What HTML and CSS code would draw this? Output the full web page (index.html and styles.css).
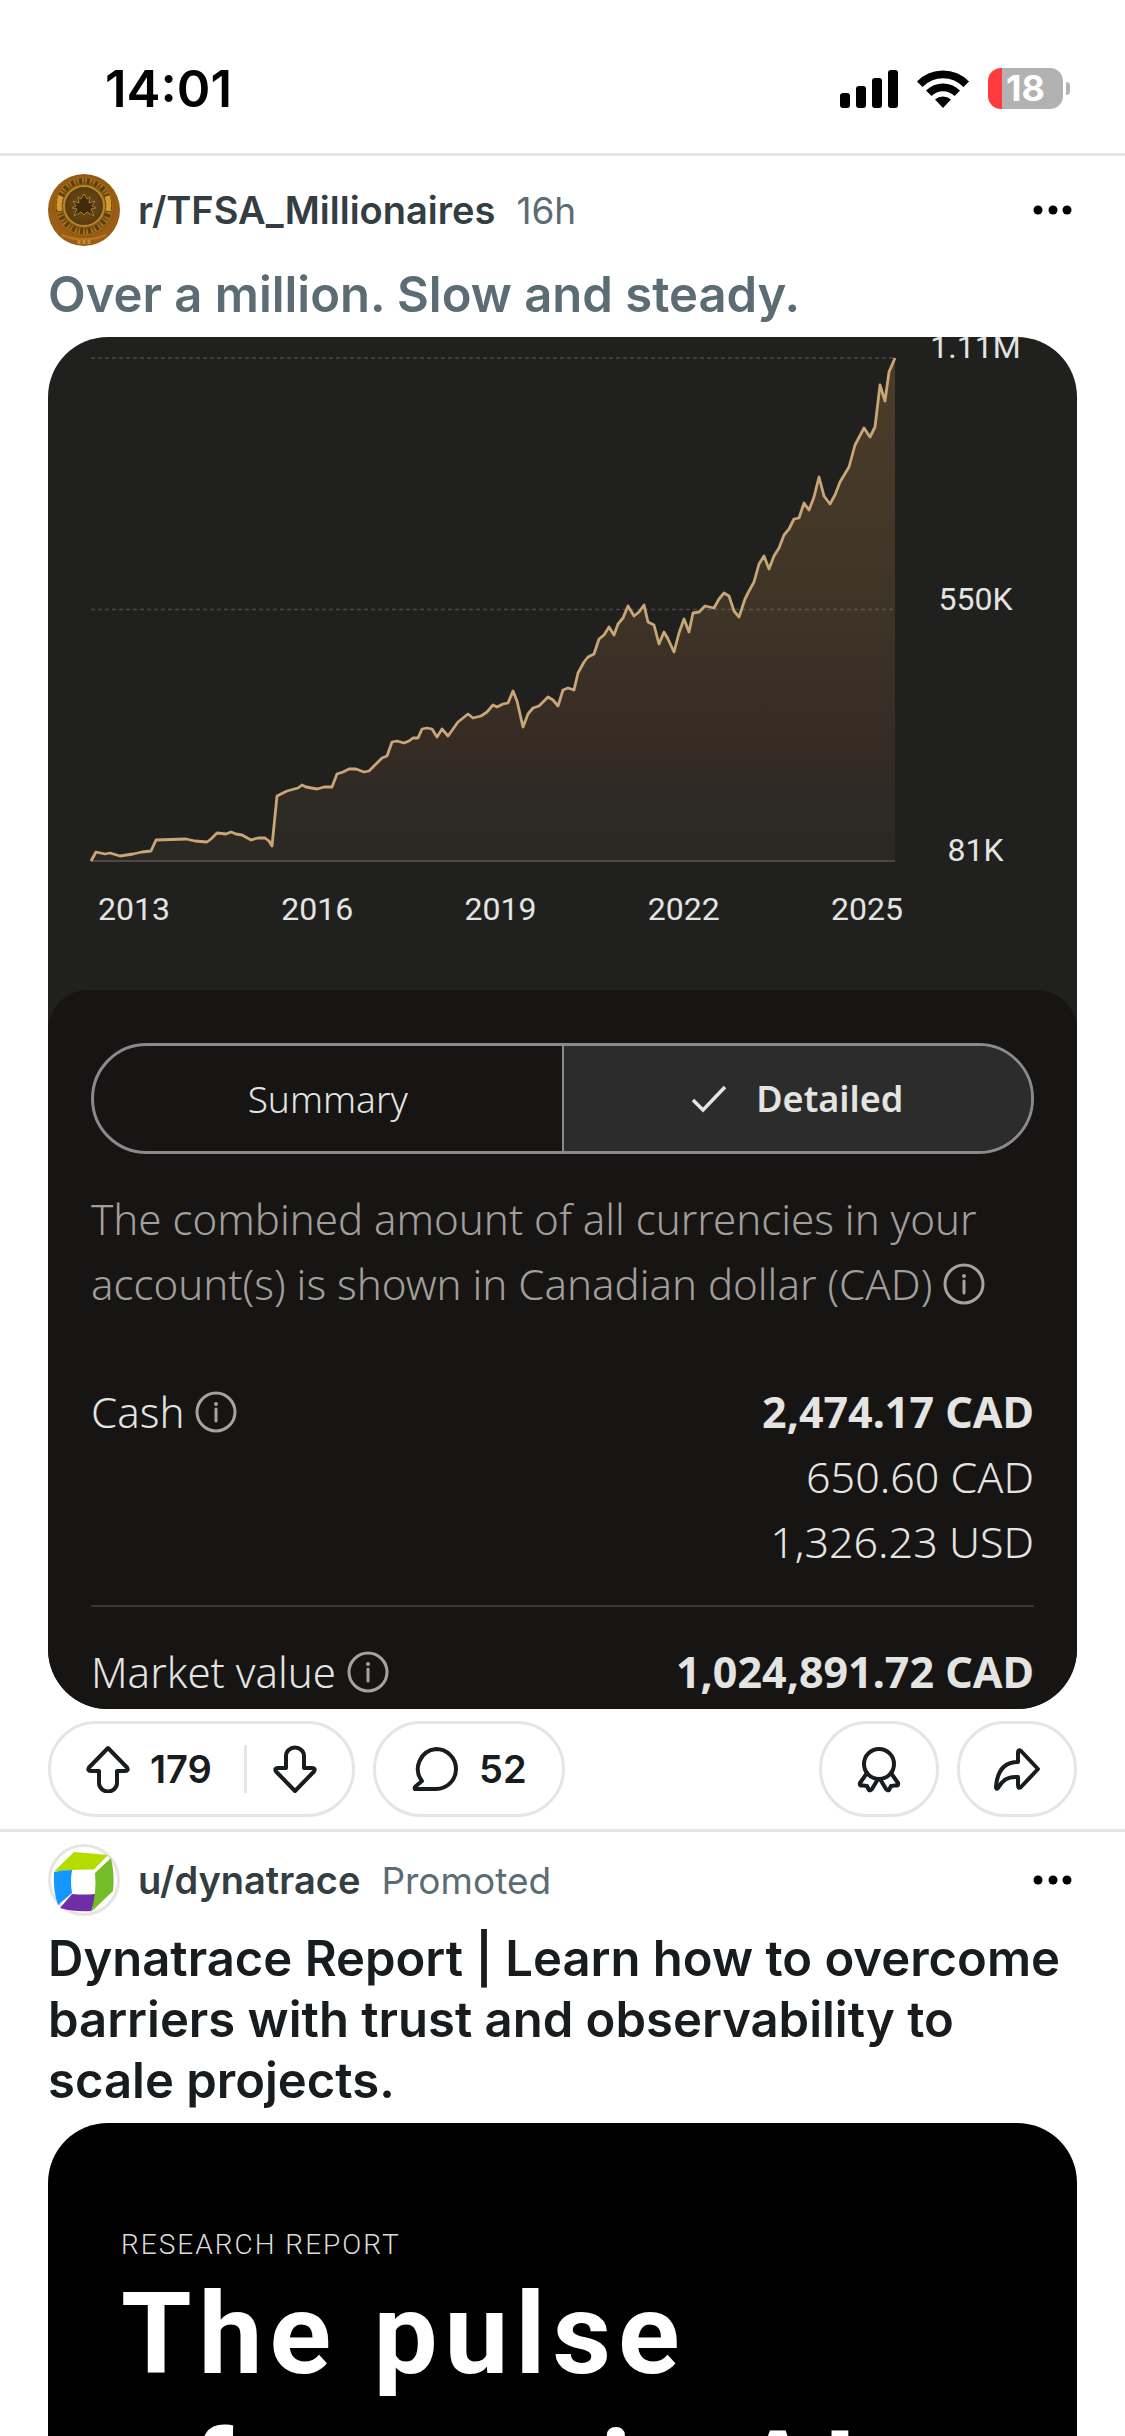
FILE: index.html
```html
<!DOCTYPE html>
<html lang="en">
<head>
<meta charset="utf-8">
<meta name="viewport" content="width=device-width, initial-scale=1">
<title>Home feed</title>
<link rel="stylesheet" href="styles.css">
</head>
<body>
<svg class="defs" aria-hidden="true">
  <symbol id="info" viewBox="0 0 42 42">
    <circle cx="21" cy="21" r="19" fill="none" stroke="currentColor" stroke-width="3"/>
    <circle cx="21" cy="13" r="2" fill="currentColor"/>
    <path d="M21 18v12" stroke="currentColor" stroke-width="3" stroke-linecap="round"/>
  </symbol>
  <symbol id="dots" viewBox="0 0 40 10">
    <circle cx="5" cy="5" r="4.5"/><circle cx="20" cy="5" r="4.5"/><circle cx="34" cy="5" r="4.5"/>
  </symbol>
</svg>

<header class="status">
  <time class="clock">14:01</time>
  <div class="indicators">
    <svg width="58" height="38" viewBox="0 0 58 38" role="img" aria-label="Signal">
      <rect x="0" y="23" width="10" height="15" rx="3"/><rect x="16" y="16" width="10" height="22" rx="3"/>
      <rect x="32" y="8" width="10" height="30" rx="3"/><rect x="48" y="0" width="10" height="38" rx="3"/>
    </svg>
    <svg width="52" height="38" viewBox="0 0 52 38" role="img" aria-label="Wi-Fi">
      <path d="M0 11.500A36 36 0 0 1 52 11.500L46.500 17A28.500 28.500 0 0 0 5.500 17Z"/>
      <path d="M9 20.500A24 24 0 0 1 43 20.500L37.500 26A16.500 16.500 0 0 0 14.500 26Z"/>
      <path d="M18 29.500A12 12 0 0 1 34 29.500L26 38Z"/>
    </svg>
    <div class="battery"><div class="battery-body">18</div><div class="battery-cap"></div></div>
  </div>
</header>

<main>
  <article class="post">
    <div class="post-head">
      <svg class="avatar" viewBox="0 0 72 72" role="img" aria-label="Gold coin">
        <defs>
          <radialGradient id="rim"><stop offset="0.6" stop-color="#6a4812"/><stop offset="0.85" stop-color="#a8741e"/><stop offset="1" stop-color="#8d5412"/></radialGradient>
          <radialGradient id="core"><stop offset="0" stop-color="#705018"/><stop offset="1" stop-color="#573a10"/></radialGradient>
        </defs>
        <circle cx="36" cy="36" r="36" fill="#9a5e16"/>
        <circle cx="36" cy="32" r="31" fill="url(#rim)"/>
        <circle cx="36" cy="32" r="25" fill="none" stroke="#5e3d0d" stroke-width="6" stroke-dasharray="3 2 1 2"/>
        <path d="M13 22A25 25 0 0 0 12 37M59 22A25 25 0 0 1 60 37" fill="none" stroke="#d39a2f" stroke-width="5"/>
        <circle cx="36" cy="32" r="20" fill="url(#core)" stroke="#b9862c" stroke-width="2"/>
        <path d="M36 20l3 5 3-2-1 6 6-2-3 5 4 2-5 1 3 7-7-4-3 3-3-3-7 4 3-7-5-1 4-2-3-5 6 2-1-6 3 2z" fill="#3f2b0c" stroke="#a67c32" stroke-width="1"/>
        <path d="M14 61q22 9 44 0" fill="none" stroke="#b87a22" stroke-width="2"/>
        <path d="M31 66v4M36 66v4M41 66v4" stroke="#c28a35" stroke-width="3"/>
      </svg>
      <a class="author" href="#">r/TFSA_Millionaires</a>
      <span class="meta">16h</span>
      <button class="more" aria-label="More options"><svg width="40" height="10"><use href="#dots"/></svg></button>
    </div>
    <h2 class="title visited">Over a million. Slow and steady.</h2>

    <div class="card account">
      <div class="chart">
        <div class="chart-body">
          <svg class="plot" viewBox="0 0 804 504" preserveAspectRatio="none" role="img" aria-label="Account value, 2013 to 2025">
            <defs>
              <linearGradient id="area" x1="0" y1="0" x2="0" y2="504" gradientUnits="userSpaceOnUse">
                <stop offset="0" stop-color="#4d3c29"/><stop offset="0.45" stop-color="#3f3527"/>
                <stop offset="0.75" stop-color="#372c24"/><stop offset="0.85" stop-color="#2f2a24"/><stop offset="1" stop-color="#2b2823"/>
              </linearGradient>
            </defs>
            <path fill="url(#area)" d="M0 503L5 494 14 496 19 495 29 498 42 496 51 494 60 493 65 482 95 481 104 483 116 484 120 481 126 475 135 476 140 474 145 476 151 477 160 482 167 480 174 480 178 483 181 488 186 438 196 433 207 430 211 427 215 429 226 431 233 429 241 429 246 416 252 414 258 411 265 411 273 414 278 413 285 406 291 400 296 398 301 384 306 383 313 385 318 383 322 380 327 380 331 371 336 370 341 371 346 379 351 371 357 378 367 364 377 356 382 360 390 358 396 354 402 347 406 349 412 346 417 345 422 333 426 343 432 369 437 356 442 350 448 348 457 339 462 342 467 348 472 332 477 330 483 332 487 315 493 304 497 299 503 296 508 281 513 277 518 269 523 277 527 266 532 260 537 248 543 258 548 254 553 247 557 264 563 267 568 286 573 274 577 281 583 294 588 275 593 261 598 274 602 255 608 254 614 248 623 250 628 241 633 235 638 238 643 253 648 259 654 241 658 233 663 224 668 206 673 198 678 211 683 198 688 190 693 177 698 171 703 161 708 160 713 145 718 152 723 139 728 119 733 138 739 146 744 137 749 124 758 109 764 87 773 70 779 79 784 69 789 27 794 43 798 14 804 0V503Z"/>
            <path d="M0 0H804M0 251.500H804" stroke="#8a867e" stroke-opacity="0.38" stroke-width="1.500" stroke-dasharray="4 3"/>
            <path d="M0 503H804" stroke="#5b554c" stroke-width="1.500"/>
            <path fill="none" stroke="#c9a677" stroke-width="2.800" stroke-linejoin="round" d="M0 503L5 494 14 496 19 495 29 498 42 496 51 494 60 493 65 482 95 481 104 483 116 484 120 481 126 475 135 476 140 474 145 476 151 477 160 482 167 480 174 480 178 483 181 488 186 438 196 433 207 430 211 427 215 429 226 431 233 429 241 429 246 416 252 414 258 411 265 411 273 414 278 413 285 406 291 400 296 398 301 384 306 383 313 385 318 383 322 380 327 380 331 371 336 370 341 371 346 379 351 371 357 378 367 364 377 356 382 360 390 358 396 354 402 347 406 349 412 346 417 345 422 333 426 343 432 369 437 356 442 350 448 348 457 339 462 342 467 348 472 332 477 330 483 332 487 315 493 304 497 299 503 296 508 281 513 277 518 269 523 277 527 266 532 260 537 248 543 258 548 254 553 247 557 264 563 267 568 286 573 274 577 281 583 294 588 275 593 261 598 274 602 255 608 254 614 248 623 250 628 241 633 235 638 238 643 253 648 259 654 241 658 233 663 224 668 206 673 198 678 211 683 198 688 190 693 177 698 171 703 161 708 160 713 145 718 152 723 139 728 119 733 138 739 146 744 137 749 124 758 109 764 87 773 70 779 79 784 69 789 27 794 43 798 14 804 0"/>
          </svg>
          <div class="y-axis"><span>1.11M</span><span>550K</span><span>81K</span></div>
        </div>
        <div class="x-axis"><span>2013</span><span>2016</span><span>2019</span><span>2022</span><span>2025</span></div>
      </div>

      <section class="panel">
        <div class="segmented">
          <button class="segment">Summary</button>
          <button class="segment selected"><svg width="36" height="28" viewBox="0 0 36 28" aria-hidden="true"><path d="M2 15l10 10L34 2" fill="none" stroke="currentColor" stroke-width="3.500"/></svg>Detailed</button>
        </div>
        <p class="note">The combined amount of all currencies in your account(s) is shown in Canadian dollar (CAD) <svg class="info" role="img" aria-label="Info"><use href="#info"/></svg></p>
        <dl class="figures">
          <div class="row">
            <dt>Cash <svg class="info" role="img" aria-label="Info"><use href="#info"/></svg></dt>
            <dd><strong>2,474.17 CAD</strong><span>650.60 CAD</span><span>1,326.23 USD</span></dd>
          </div>
          <div class="row">
            <dt>Market value <svg class="info" role="img" aria-label="Info"><use href="#info"/></svg></dt>
            <dd><strong>1,024,891.72 CAD</strong></dd>
          </div>
        </dl>
      </section>
    </div>

    <div class="actions">
      <div class="pill votes">
        <button class="vote" aria-label="Upvote"><svg width="44" height="48" viewBox="0 0 44 48"><path d="M22 3L41 22.500Q43 26 39 26H31V38A9 8.500 0 0 1 13 38V26H5Q1 26 3 22.500Z"/></svg><span>179</span></button>
        <span class="split"></span>
        <button class="vote" aria-label="Downvote"><svg width="44" height="48" viewBox="0 0 44 48"><path d="M22 46L41 26.500Q43 23 39 23H31V11A9 8.500 0 0 0 13 11V23H5Q1 23 3 26.500Z"/></svg></button>
      </div>
      <button class="pill comments" aria-label="Comments"><svg width="48" height="48" viewBox="0 0 48 48"><path d="M25 4A20 20 0 1 1 25 44H4Q3 43 5 41L11 36A20 20 0 0 1 25 4Z"/></svg><span>52</span></button>
      <button class="pill round push" aria-label="Award"><svg width="48" height="48" viewBox="0 0 48 48"><circle cx="24" cy="19" r="15"/><path d="M12 28L5 38Q4 41 8 40.500L12 41 14 45Q15 46 17 44L23 34M36 28L43 38Q44 41 40 40.500L36 41 34 45Q33 46 31 44L25 34"/></svg></button>
      <button class="pill round" aria-label="Share"><svg width="48" height="48" viewBox="0 0 48 48"><path d="M25 8Q25 4 28 6L45 24 28 42Q25 44 25 40V32C14 31 9 36 5 43Q3 45 3 42C4 28 10 17 25 17Z"/></svg></button>
    </div>
  </article>

  <article class="post promoted">
    <div class="post-head">
      <svg class="avatar" viewBox="0 0 72 72" role="img" aria-label="Dynatrace">
        <circle cx="36" cy="36" r="34.500" fill="#fff" stroke="#e5e5e5" stroke-width="3"/>
        <path d="M26 8L60 11 46 25.500Q26 25 6 27.500Z" fill="#b4dc00"/>
        <path d="M6 28Q14 26 24 26Q22 38 24 49L10 61Q5 48 6 28Z" fill="#1496ff"/>
        <path d="M24 50Q36 51 47 50Q47 60 43 67Q26 68 12 64Z" fill="#6f2da8"/>
        <path d="M63 14Q67 32 65 47L43 68Q49 49 47 29Z" fill="#73be28"/>
      </svg>
      <a class="author" href="#">u/dynatrace</a>
      <span class="meta">Promoted</span>
      <button class="more" aria-label="More options"><svg width="40" height="10"><use href="#dots"/></svg></button>
    </div>
    <h2 class="title">Dynatrace Report | Learn how to overcome barriers with trust and observability to scale projects.</h2>
    <div class="card ad">
      <p class="ad-kicker">RESEARCH REPORT</p>
      <p class="ad-headline">The pulse<br>of agentic AI</p>
    </div>
  </article>
</main>
</body>
</html>
```
FILE: styles.css
```css
*, *::before, *::after { box-sizing: border-box; }

body {
  display: flex;
  flex-direction: column;
  height: 100vh;
  margin: 0;
  overflow: hidden;
  background: #fff;
  color: #181c1f;
  font-family: Inter, "Liberation Sans", sans-serif;
}

button {
  margin: 0;
  padding: 0;
  border: 0;
  background: none;
  color: inherit;
  font: inherit;
}

svg { display: block; flex: none; }
p, h2, dl, dd { margin: 0; }
.defs { display: none; }

/* Status bar */
.status {
  display: flex;
  flex: none;
  align-items: flex-start;
  justify-content: space-between;
  height: 156px;
  padding: 58px 55px 0 105px;
  border-bottom: 3px solid #e5e5e5;
  color: #000;
}
.clock { font-size: 51px; font-weight: 600; line-height: 61px; }
.indicators { display: flex; align-items: center; gap: 19px; padding-top: 10px; }
.battery { display: flex; align-items: center; gap: 3px; }
.battery-body {
  width: 75px;
  border-radius: 13px;
  background: linear-gradient(90deg, #ff3b3f 14px, #b2b2b2 14px);
  color: #fff;
  font-size: 36px;
  font-weight: 700;
  line-height: 41px;
  text-align: center;
}
.battery-cap { width: 4px; height: 13px; border-radius: 0 4px 4px 0; background: #b2b2b2; }

/* Posts */
main { display: flex; flex: 1; flex-direction: column; min-height: 0; }
.post { flex: none; padding: 0 48px 12px; border-bottom: 3px solid #e5e5e5; }
.promoted {
  display: flex;
  flex: 1;
  flex-direction: column;
  min-height: 0;
  padding-bottom: 0;
  border-bottom: 0;
}
.post-head { display: flex; align-items: center; padding: 18px 0; }
.promoted .post-head { padding: 12px 0; }
.avatar { width: 72px; height: 72px; }
.author { margin-left: 18px; color: #333d42; font-size: 38px; font-weight: 600; text-decoration: none; }
.meta { margin-left: 21px; color: #5c6c74; font-size: 37px; }
.more { margin-left: auto; padding: 20px 4px; }
.title {
  margin-bottom: 12px;
  font-size: 49px;
  font-weight: 600;
  line-height: 61px;
}
.visited { color: #5c6c74; }
.card { overflow: hidden; border-radius: 60px; }

/* Account screenshot */
.account { background: #20211f; color: #e4e4e2; }
.chart { height: 653px; padding: 21px 0 0 43px; font-family: Roboto, sans-serif; font-size: 32px; }
.chart-body { display: flex; height: 504px; }
.plot { flex: 1; min-width: 0; height: 504px; overflow: visible; }
.y-axis {
  display: flex;
  flex: none;
  flex-direction: column;
  justify-content: space-between;
  width: 182px;
  height: 541px;
  margin-top: -30px;
  padding-right: 21px;
  line-height: 38px;
  text-align: center;
}
.x-axis {
  display: flex;
  justify-content: space-between;
  padding: 28px 174px 0 7px;
  line-height: 38px;
}
.panel {
  padding: 53px 43px 5px;
  border-radius: 40px 40px 0 0;
  background: #161513;
  font-family: "Noto Sans", sans-serif;
  font-size: 42px;
  font-weight: 300;
  line-height: 65px;
}
.segmented {
  display: flex;
  height: 111px;
  overflow: hidden;
  border: 3px solid #8b898c;
  border-radius: 56px;
  font-size: 37px;
}
.segment {
  display: flex;
  flex: 1;
  align-items: center;
  justify-content: center;
  gap: 29px;
}
.selected { border-left: 2px solid #8b898c; background: #2c2c2c; font-size: 36px; font-weight: 600; }
.info { display: inline-block; width: 42px; height: 42px; color: #a5a3a0; vertical-align: -5px; }
.note { padding-top: 32px; color: #a19f9c; }
.row { display: flex; justify-content: space-between; }
.row + .row { border-top: 2px solid #3a3937; }
.row:first-child { padding: 63px 0 31px; }
.row:last-child { padding-top: 32px; }
dd { display: flex; flex-direction: column; font-size: 43px; text-align: right; }
dd strong { font-weight: 700; }

/* Post actions */
.actions { display: flex; gap: 18px; padding-top: 12px; font-size: 38px; font-weight: 600; }
.actions svg { fill: none; stroke: currentColor; stroke-width: 4; stroke-linejoin: round; stroke-linecap: round; }
.pill {
  display: flex;
  align-items: center;
  justify-content: center;
  gap: 20px;
  height: 96px;
  border: 3px solid #e5e5e5;
  border-radius: 48px;
}
.votes { gap: 26px; padding: 0 35px; }
.vote { display: flex; align-items: center; gap: 20px; }
.split { width: 3px; height: 48px; margin-left: 6px; background: #e5e5e5; }
.comments { width: 192px; }
.round { width: 120px; }
.push { margin-left: auto; }

/* Promoted card */
.ad {
  flex: 1;
  min-height: 0;
  padding: 102px 73px 0;
  border-radius: 60px 60px 0 0;
  background: #000;
  color: #fff;
  font-family: Roboto, sans-serif;
}
.ad-kicker { color: #dcdcdc; font-size: 28px; font-weight: 300; letter-spacing: 2px; line-height: 40px; }
.ad-headline { font-size: 114px; font-weight: 700; letter-spacing: 7px; line-height: 138px; }
```
